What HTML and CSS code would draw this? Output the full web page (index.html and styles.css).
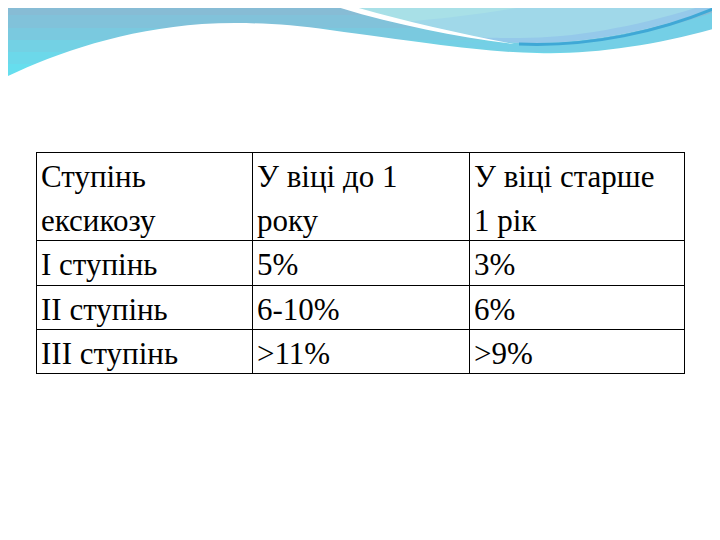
FILE: index.html
```html
<!DOCTYPE html>
<html>
<head>
<meta charset="utf-8">
<link rel="stylesheet" href="styles.css">
</head>
<body>
<svg class="wave" width="720" height="90" viewBox="0 0 720 90" xmlns="http://www.w3.org/2000/svg">
  <path d="M0,0 H720 V90 H0 Z" fill="#87bcd5"/>
  <path d="M0,15 H720 V90 H0 Z" fill="#81c2da"/>
  <path d="M0,28 H720 V90 H0 Z" fill="#7ac9df"/>
  <path d="M0,40 H720 V90 H0 Z" fill="#73d1e4"/>
  <path d="M0,52 H720 V90 H0 Z" fill="#6cd8ea"/>
  <path d="M0,64 H720 V90 H0 Z" fill="#66deee"/>
  <path d="M420,40 C470,46 500,50 537,52 C590,54 660,44 720,27 V10 C650,35 580,48 519,44 Z" fill="#74cfe6"/>
  <path d="M321,0 H720 V7 C650,32 580,45 519,43 C460,35 380,20 321,0 Z" fill="#a8e0e7"/>
  <path d="M400,22 C460,36 500,42 519,43 C580,45 650,32 720,7 V0 H560 C520,8 460,18 400,22 Z" fill="#a0d8e9"/>
  <path d="M470,37 C495,41 510,43 519,43 C580,45 650,32 720,7 V0 C650,24 580,38 520,38 C505,38 490,38 470,37 Z" fill="#95c9ea"/>
  <path d="M316,0 C380,22 450,36 514,44 C452,32 386,17 332,0 Z" fill="#ffffff"/>
  <path d="M519,44 C590,47 660,32 720,6" fill="none" stroke="#3fa8d6" stroke-width="3"/>
  <path d="M0,80 C50,55 120,30 202,24 C240,22 280,23 330,30 C420,42 480,52 537,53 C590,55 660,45 720,27 V90 H0 Z" fill="#ffffff"/>
</svg>
<div class="grid">
  <div class="cell">Ступінь<br>ексикозу</div>
  <div class="cell">У віці до 1<br>року</div>
  <div class="cell">У віці старше<br>1 рік</div>
  <div class="cell">І ступінь</div>
  <div class="cell">5%</div>
  <div class="cell">3%</div>
  <div class="cell">ІІ ступінь</div>
  <div class="cell">6-10%</div>
  <div class="cell">6%</div>
  <div class="cell">ІІІ ступінь</div>
  <div class="cell">&gt;11%</div>
  <div class="cell">&gt;9%</div>
</div>
</body>
</html>
```
FILE: styles.css
```css
.wave {
  display: block;
  margin: -8px -8px 0 -8px;
}
.grid {
  margin: 62px 0 0 28px;
  width: 649px;
  display: grid;
  grid-template-columns: 215px 216px 214px;
  grid-template-rows: 87px 44px 43px 43px;
  gap: 1px;
  padding: 1px;
  box-sizing: border-box;
  background: #000;
}
.cell {
  background: #fff;
  font-family: "Liberation Serif";
  font-size: 31px;
  line-height: 44px;
  padding: 2px 0 0 4px;
  white-space: nowrap;
  box-sizing: border-box;
}
html body .grid .cell {
  font-family: "Liberation Serif", "Times New Roman", serif !important;
}
```
